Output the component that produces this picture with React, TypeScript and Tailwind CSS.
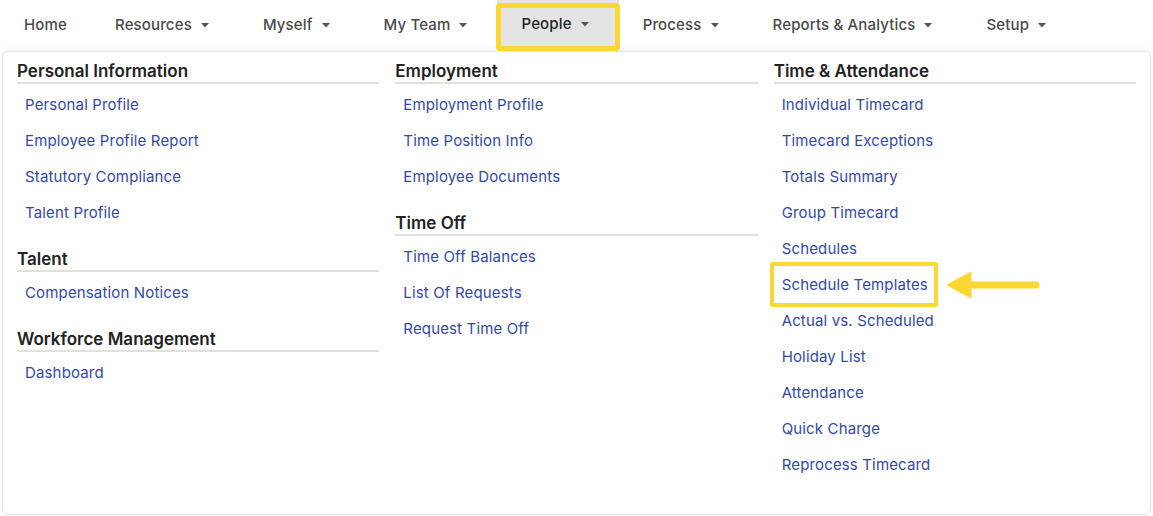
import React from 'react'

const font = { fontFamily: 'Inter, "Open Sans", Arial, sans-serif' }

const navItems = [
  { label: 'Home', caret: false },
  { label: 'Resources', caret: true },
  { label: 'Myself', caret: true },
  { label: 'My Team', caret: true },
  { label: 'People', caret: true, active: true },
  { label: 'Process', caret: true },
  { label: 'Reports & Analytics', caret: true },
  { label: 'Setup', caret: true },
]

type Section = { title: string; links: string[] }

const columns: Section[][] = [
  [
    {
      title: 'Personal Information',
      links: ['Personal Profile', 'Employee Profile Report', 'Statutory Compliance', 'Talent Profile'],
    },
    { title: 'Talent', links: ['Compensation Notices'] },
    { title: 'Workforce Management', links: ['Dashboard'] },
  ],
  [
    {
      title: 'Employment',
      links: ['Employment Profile', 'Time Position Info', 'Employee Documents'],
    },
    { title: 'Time Off', links: ['Time Off Balances', 'List Of Requests', 'Request Time Off'] },
  ],
  [
    {
      title: 'Time & Attendance',
      links: [
        'Individual Timecard',
        'Timecard Exceptions',
        'Totals Summary',
        'Group Timecard',
        'Schedules',
        'Schedule Templates',
        'Actual vs. Scheduled',
        'Holiday List',
        'Attendance',
        'Quick Charge',
        'Reprocess Timecard',
      ],
    },
  ],
]

function Caret() {
  return (
    <svg width="8" height="5" viewBox="0 0 8 5" className="ml-[9px]">
      <path d="M0 0h8L4 4.5z" fill="#555" />
    </svg>
  )
}

// highlight arrow pointing at the outlined link
function Arrow() {
  return (
    <svg width="96" height="28" viewBox="0 0 96 28" className="ml-[18px]">
      <polygon points="1,14 25,1 25,27" fill="#fdd731" strokeLinejoin="round" stroke="#fdd731" strokeWidth="1" />
      <line x1="22" y1="14" x2="90" y2="14" stroke="#fdd731" strokeWidth="7" strokeLinecap="round" />
    </svg>
  )
}

function MenuSection({ section }: { section: Section }) {
  return (
    <div className="mb-[16.5px]">
      <div className="border-b-2 border-[#e4dfda] text-[17px] leading-[22px] font-semibold text-[#222]">
        {section.title}
      </div>
      <ul className="mt-[3.5px]">
        {section.links.map((link) => {
          const marked = link === 'Schedule Templates'
          return (
            <li key={link} className="flex h-9 items-center pl-2">
              <a className="relative text-[15px] tracking-[0.15px] text-[#3449a3]" href="#">
                {link}
                {marked && (
                  <span className="absolute -left-[12px] -right-[10px] -top-[12px] -bottom-[11px] rounded-[3px] border-4 border-[#fdd731]" />
                )}
              </a>
              {marked && <Arrow />}
            </li>
          )
        })}
      </ul>
    </div>
  )
}

export default function App() {
  return (
    <div className="flex h-[516px] w-[1153px] flex-col overflow-hidden bg-white" style={font}>
      {/* Top nav */}
      <nav className="relative z-20 flex h-12 shrink-0 items-stretch">
        {navItems.map((item) => (
          <div
            key={item.label}
            className={`relative flex items-center px-6 pt-[2px] text-[15px] font-medium tracking-[0.15px] ${item.caret ? 'pr-[30px]' : ''} ${
              item.active ? 'bg-[#e4e4e4] text-[#222] border-b border-[#c9c9c9]' : 'text-[#4a4a4a]'
            }`}
          >
            {item.label}
            {item.caret && <Caret />}
            {item.active && (
              <span className="absolute -left-px -right-px top-[3px] -bottom-[4px] rounded-[4px] border-[5px] border-[#fdd731]" />
            )}
          </div>
        ))}
      </nav>

      {/* Dropdown panel */}
      <div className="relative z-10 mx-[2px] mt-[3px] h-[464px] rounded-md border border-[#e6e6e6] bg-white px-[14px] pt-[7.5px] shadow-[0_-2px_6px_rgba(0,0,0,0.06)]">
        <div className="grid grid-cols-3 gap-4">
          {columns.map((col, i) => (
            <div key={i}>
              {col.map((section) => (
                <MenuSection key={section.title} section={section} />
              ))}
            </div>
          ))}
        </div>
      </div>
    </div>
  )
}
